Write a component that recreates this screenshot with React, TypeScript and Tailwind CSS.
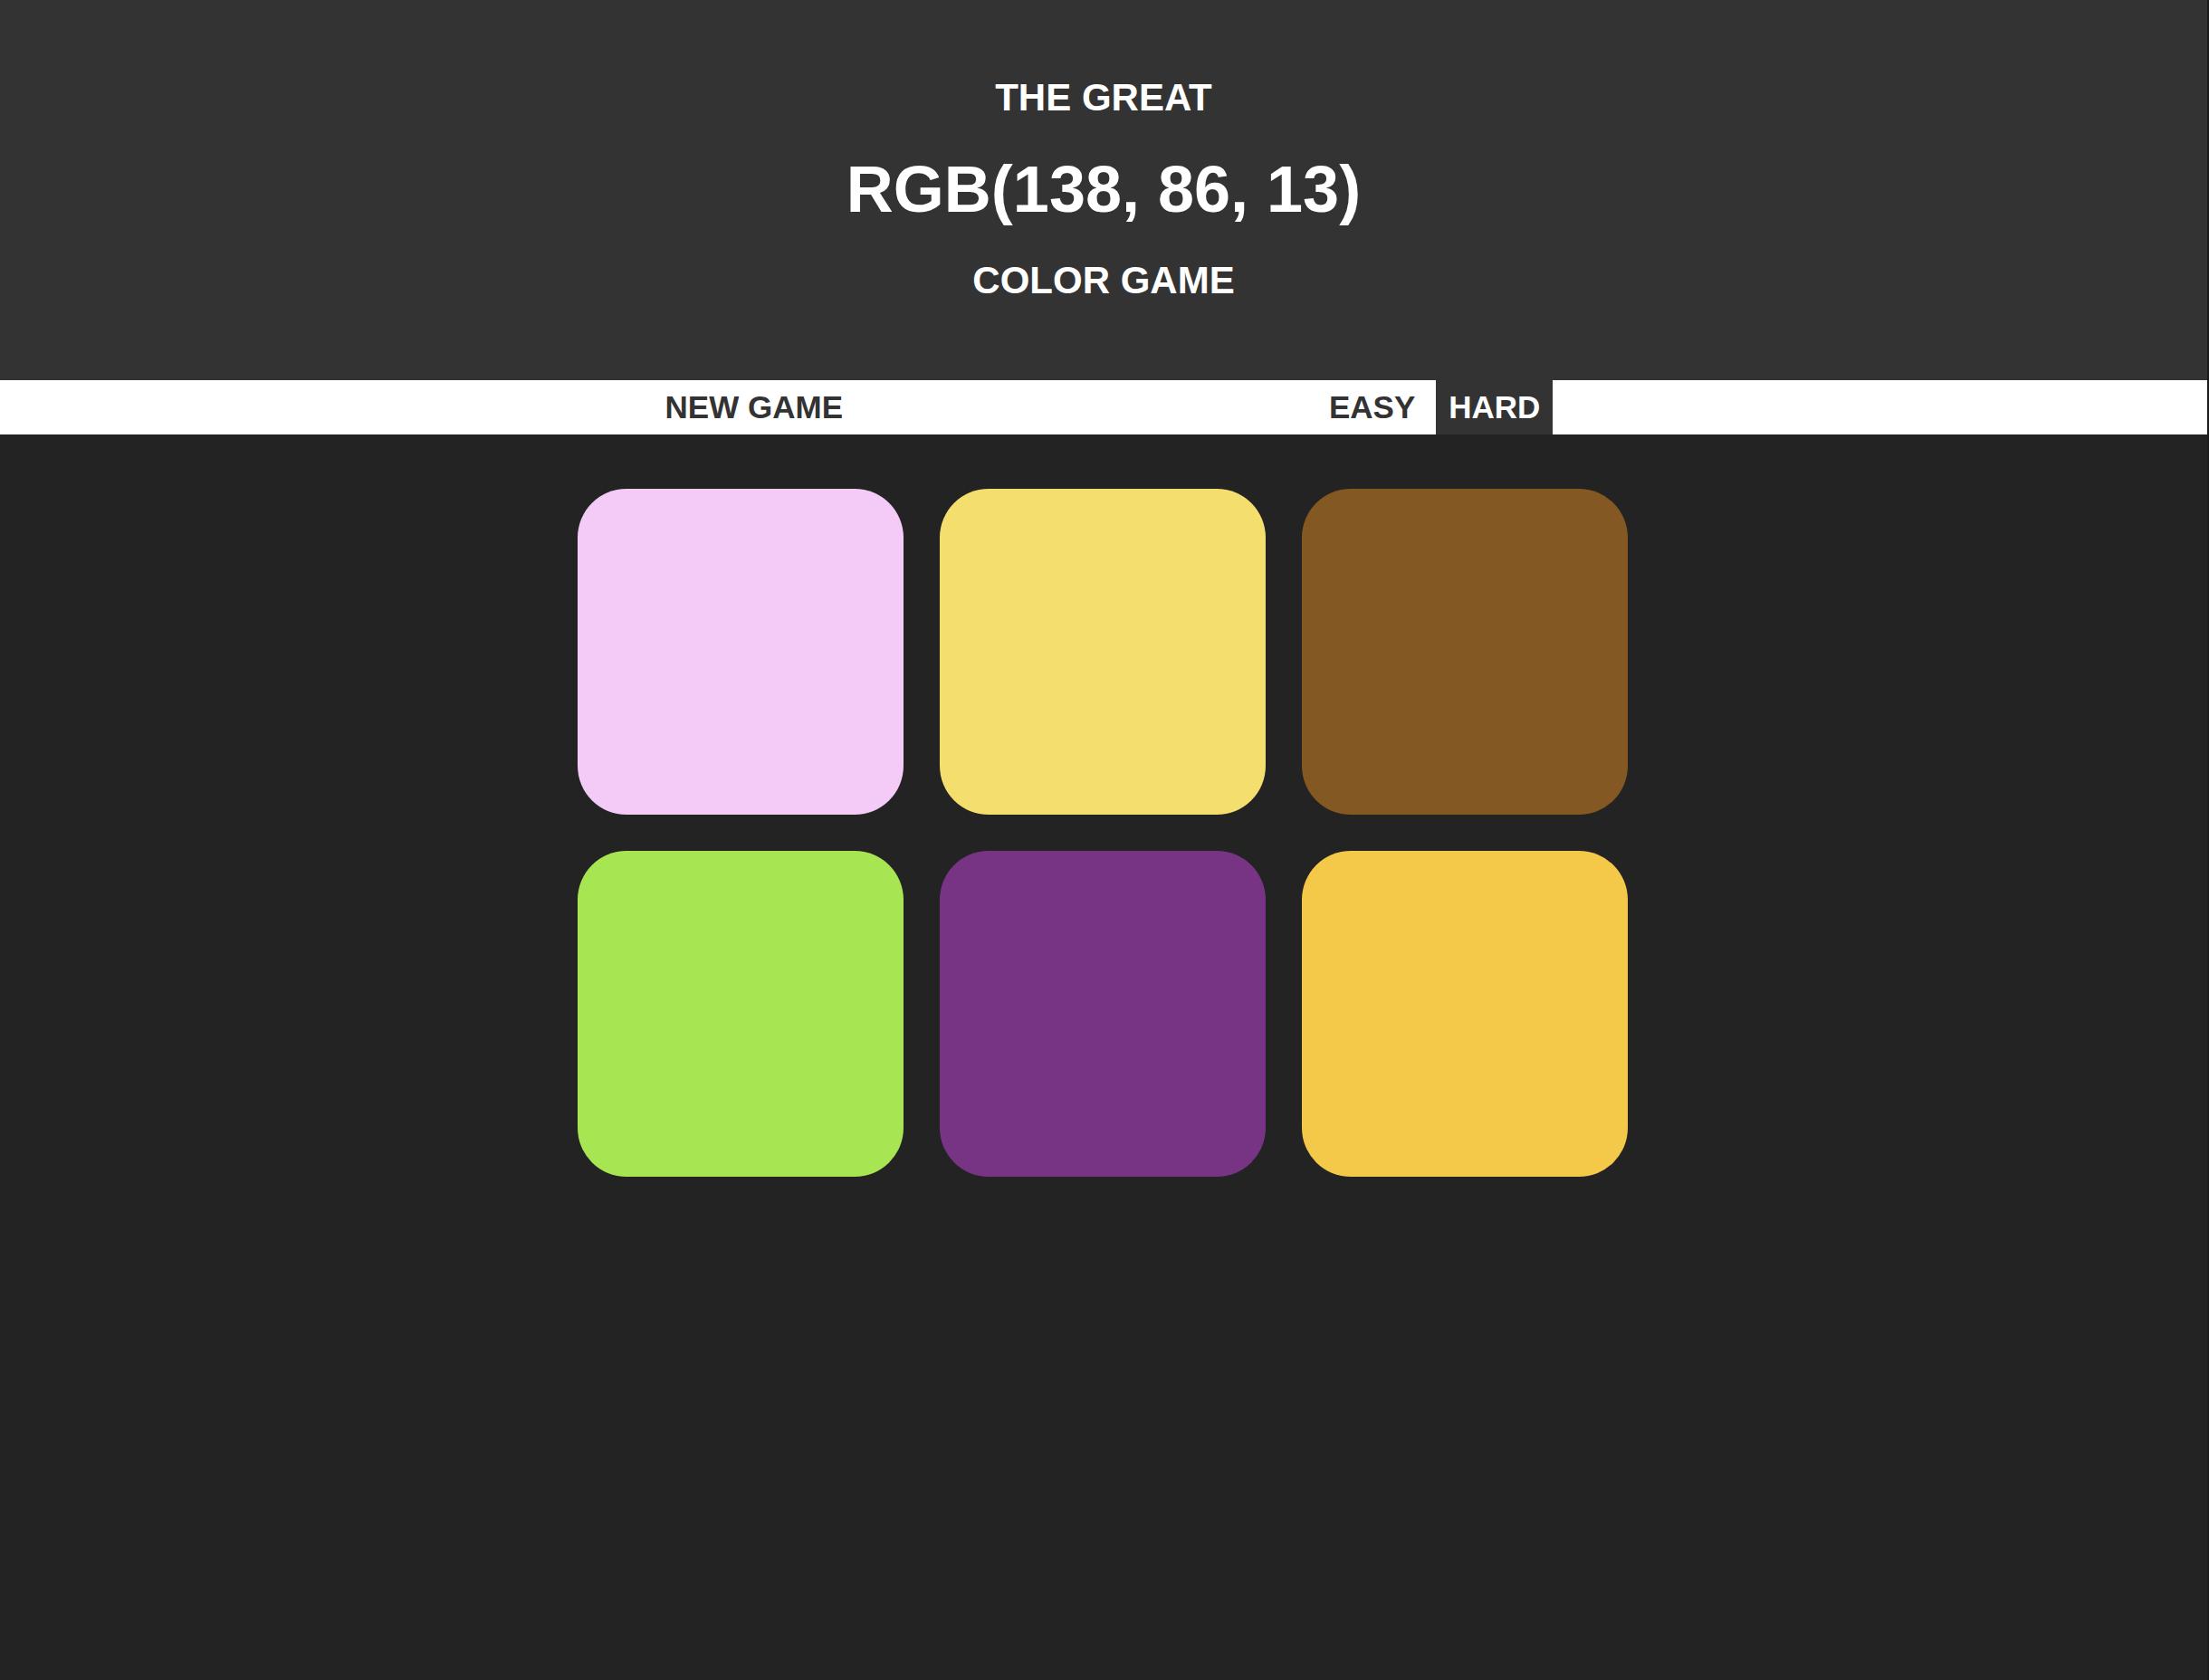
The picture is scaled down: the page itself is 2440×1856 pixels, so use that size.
import React from "react"

const colors = ["#f4cbf7", "#f4df6e", "#845822", "#a7e553", "#773484", "#f4c849"]

const Square: React.FC<{ color: string }> = ({ color }) => (
    <div className="w-[360px] h-[360px] rounded-[54px]" style={{ backgroundColor: color }} />
)

export default function App() {
    return (
        <div className="min-h-screen bg-[#232323] border-r-2 border-[#1b1b1b] font-['Liberation_Sans',Arial,sans-serif] font-bold">
            <header className="bg-[#333333] text-white text-center flex flex-col gap-[33px] pt-[80px] pb-[82px]">
                <div className="h-[56px] leading-[56px] text-[42px]">THE GREAT</div>
                <div className="h-[80px] leading-[80px] text-[72px]">RGB(138, 86, 13)</div>
                <div className="h-[56px] leading-[56px] text-[42px]">COLOR GAME</div>
            </header>

            <nav className="bg-white h-[60px] flex justify-center items-stretch text-[35px] text-[#333333] pr-[2px]">
                <button className="px-[14px] leading-[60px] uppercase">New Game</button>
                <span className="w-[509px]" />
                <button className="px-[14px] leading-[60px] uppercase">Easy</button>
                <button className="ml-[9px] px-[14px] leading-[60px] uppercase bg-[#333333] text-white">Hard</button>
            </nav>

            <main className="pt-[60px] pr-[2px] grid grid-cols-[repeat(3,360px)] justify-center gap-[40px]">
                {colors.map((c, i) => (
                    <Square key={i} color={c} />
                ))}
            </main>
        </div>
    )
}
